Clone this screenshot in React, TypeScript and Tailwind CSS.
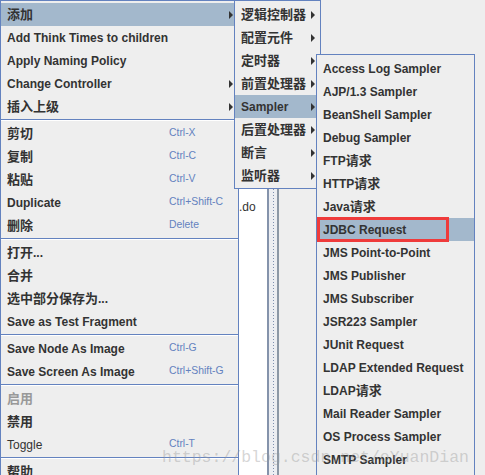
import React from 'react';

type Item = {
  label: string;
  shortcut?: string;
  arrow?: boolean;
  active?: boolean;
  disabled?: boolean;
  normal?: boolean;
};

const mainGroups: Item[][] = [
  [
    { label: '添加', arrow: true, active: true },
    { label: 'Add Think Times to children' },
    { label: 'Apply Naming Policy' },
    { label: 'Change Controller', arrow: true },
    { label: '插入上级', arrow: true },
  ],
  [
    { label: '剪切', shortcut: 'Ctrl-X' },
    { label: '复制', shortcut: 'Ctrl-C' },
    { label: '粘贴', shortcut: 'Ctrl-V' },
    { label: 'Duplicate', shortcut: 'Ctrl+Shift-C' },
    { label: '删除', shortcut: 'Delete' },
  ],
  [
    { label: '打开...' },
    { label: '合并' },
    { label: '选中部分保存为...' },
    { label: 'Save as Test Fragment' },
  ],
  [
    { label: 'Save Node As Image', shortcut: 'Ctrl-G' },
    { label: 'Save Screen As Image', shortcut: 'Ctrl+Shift-G' },
  ],
  [
    { label: '启用', disabled: true },
    { label: '禁用' },
    { label: 'Toggle', shortcut: 'Ctrl-T', normal: true },
  ],
  [{ label: '帮助' }],
];

const addItems: Item[] = [
  { label: '逻辑控制器', arrow: true },
  { label: '配置元件', arrow: true },
  { label: '定时器', arrow: true },
  { label: '前置处理器', arrow: true },
  { label: 'Sampler', arrow: true, active: true },
  { label: '后置处理器', arrow: true },
  { label: '断言', arrow: true },
  { label: '监听器', arrow: true },
];

const samplers = [
  'Access Log Sampler',
  'AJP/1.3 Sampler',
  'BeanShell Sampler',
  'Debug Sampler',
  'FTP请求',
  'HTTP请求',
  'Java请求',
  'JDBC Request',
  'JMS Point-to-Point',
  'JMS Publisher',
  'JMS Subscriber',
  'JSR223 Sampler',
  'JUnit Request',
  'LDAP Extended Request',
  'LDAP请求',
  'Mail Reader Sampler',
  'OS Process Sampler',
  'SMTP Sampler',
];

// chinese runs are drawn a bit larger than the latin ones
function Label({ text }: { text: string }) {
  return (
    <>
      {text.split(/([\u3400-\u9fff]+)/).map((part, i) =>
        /[\u3400-\u9fff]/.test(part) ? (
          <span key={i} className="text-[13px]">{part}</span>
        ) : (
          <React.Fragment key={i}>{part}</React.Fragment>
        )
      )}
    </>
  );
}

function Arrow() {
  return <span className="ml-auto h-0 w-0 shrink-0 border-y-[4px] border-l-[4px] border-y-transparent border-l-[#333333]" />;
}

function Row({ item, labelWidth, children }: { item: Item; labelWidth?: string; children?: React.ReactNode }) {
  return (
    <div
      className={`relative flex h-[23px] items-center pl-[6px] pr-[5px] text-[12px] leading-none ${
        item.active ? 'bg-[#a3b8cc]' : ''
      } ${item.disabled ? 'text-[#999999]' : 'text-[#333333]'} ${item.normal ? 'font-normal' : 'font-bold'}`}
    >
      <span className={`whitespace-nowrap ${labelWidth ?? ''}`}>
        <Label text={item.label} />
      </span>
      {item.shortcut && <span className="whitespace-nowrap text-[10.4px] font-normal text-[#6382bf]">{item.shortcut}</span>}
      {item.arrow && <Arrow />}
      {children}
    </div>
  );
}

function Separator() {
  return (
    <div className="flex h-[4px] flex-col justify-center">
      <div className="h-px bg-[#6382bf]" />
      <div className="h-px bg-white" />
    </div>
  );
}

export default function App() {
  return (
    <div className="relative h-[475px] w-[485px] overflow-hidden bg-[#eeeeee] font-['Liberation_Sans','Noto_Sans_CJK_SC',sans-serif]">
      {/* window behind the popups */}
      <div className="flex h-full">
        <div className="w-[239px] shrink-0" />
        <div className="w-[28px] shrink-0 overflow-hidden bg-white pt-[201px] text-[12px] leading-none text-[#333333]">.do</div>
        <div className="w-[2px] shrink-0 bg-[#8593ab]" />
        <div className="flex w-[8px] shrink-0 justify-center bg-[#eceef2]">
          <div className="w-px bg-[repeating-linear-gradient(to_bottom,#7d8fae_0_1px,transparent_1px_3px)]" />
        </div>
        <div className="w-[2px] shrink-0 bg-[#8c98a6]" />
        <div className="flex-1" />
      </div>

      {/* context menu */}
      <div className="absolute left-0 top-0 z-10 w-[239px] border border-[#6382bf] bg-[#eeeeee] py-[2px]">
        {mainGroups.map((group, gi) => (
          <React.Fragment key={gi}>
            {gi > 0 && <Separator />}
            {group.map((item) => (
              <Row key={item.label} item={item} labelWidth="w-[162px] shrink-0" />
            ))}
          </React.Fragment>
        ))}
      </div>

      {/* 添加 submenu */}
      <div className="absolute left-[234px] top-0 z-20 w-[87px] border border-[#6382bf] bg-[#eeeeee] pb-[1px] pt-[2px]">
        {addItems.map((item) => (
          <Row key={item.label} item={item} />
        ))}
      </div>

      {/* Sampler submenu, runs on past the bottom of the window */}
      <div className="absolute left-[316px] top-[54px] z-30 w-[159px] border border-[#6382bf] bg-[#eeeeee] pb-[24px] pt-[2px]">
        {samplers.map((s) => (
          <Row key={s} item={{ label: s, active: s === 'JDBC Request' }}>
            {s === 'JDBC Request' && (
              <div className="absolute -top-[1px] left-0 h-[25px] w-[132px] border-[3px] border-[#ef3b3b]" />
            )}
          </Row>
        ))}
      </div>

      {/* watermark */}
      <div className="pointer-events-none absolute left-[162px] top-[450px] z-40 whitespace-nowrap font-['Liberation_Mono',monospace] text-[16.5px] leading-none text-[rgba(150,150,150,0.4)]">
        https://blog.csdn.net/oYuanDian
      </div>
    </div>
  );
}
